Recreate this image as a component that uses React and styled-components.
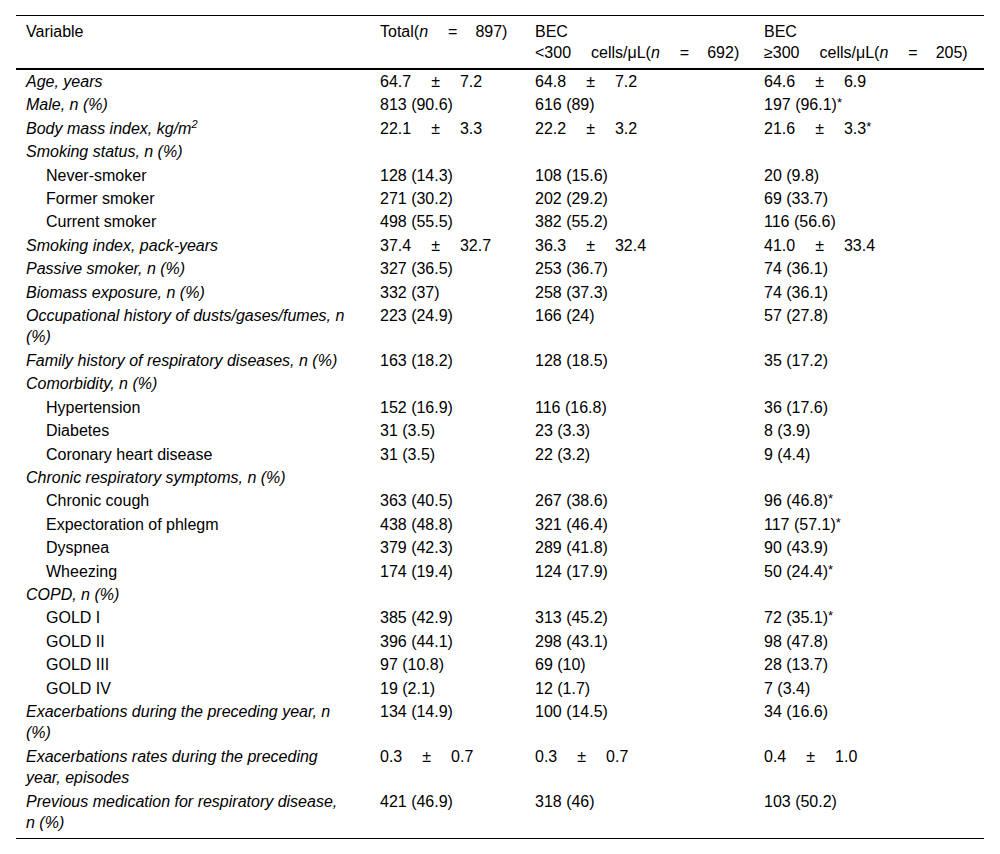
import React from 'react';
import styled, { createGlobalStyle } from 'styled-components';

const GlobalStyle = createGlobalStyle`
  html, body {
    margin: 0;
    padding: 0;
    background: #fff;
  }
  body {
    font-family: "Liberation Sans", Arial, sans-serif;
    font-size: 16px;
    color: #000;
  }
`

const Page = styled.div`
  padding: 15px 16px 0 16px;
`

const Table = styled.table`
  width: 968px;
  border-collapse: collapse;
  table-layout: fixed;
  border-top: 1px solid #000;
  border-bottom: 1px solid #000;

  tbody tr:last-child td {
    padding-bottom: 5px;
  }
`

const HeadCell = styled.th`
  text-align: left;
  vertical-align: top;
  font-weight: normal;
  line-height: 21px;
  padding: 5px 10px 5px 10px;
  border-bottom: 2px solid #000;
  white-space: nowrap;
`

const Cell = styled.td`
  vertical-align: top;
  line-height: 21.4px;
  padding: 1px 10px;
  white-space: nowrap;
  font-style: ${p => (p.$italic ? 'italic' : 'normal')};
  padding-left: ${p => (p.$indent ? '30px' : '10px')};
`

const Pm = styled.span`
  margin: 0 20px 0 20px;
`

const Sup = styled.sup`
  font-size: 11px;
  line-height: 0;
  vertical-align: 6px;
`

const Star = styled.sup`
  font-size: 13px;
  line-height: 0;
  vertical-align: 3px;
`

const Gap = styled.span`
  display: inline-block;
  width: ${p => p.$w || 18}px;
`

const mean = (a, b, star) => (
  <>
    {a}<Pm>±</Pm>{b}{star && <Star>*</Star>}
  </>
)

const pct = (v, star) => (
  <>
    {v}{star && <Star>*</Star>}
  </>
)

const rows = [
  { label: 'Age, years', it: true, v: [mean('64.7', '7.2'), mean('64.8', '7.2'), mean('64.6', '6.9')] },
  { label: 'Male, n (%)', it: true, v: ['813 (90.6)', '616 (89)', pct('197 (96.1)', true)] },
  { label: <>Body mass index, kg/m<Sup>2</Sup></>, it: true, v: [mean('22.1', '3.3'), mean('22.2', '3.2'), mean('21.6', '3.3', true)] },
  { label: 'Smoking status, n (%)', it: true, v: ['', '', ''] },
  { label: 'Never-smoker', indent: true, v: ['128 (14.3)', '108 (15.6)', '20 (9.8)'] },
  { label: 'Former smoker', indent: true, v: ['271 (30.2)', '202 (29.2)', '69 (33.7)'] },
  { label: 'Current smoker', indent: true, v: ['498 (55.5)', '382 (55.2)', '116 (56.6)'] },
  { label: 'Smoking index, pack-years', it: true, v: [mean('37.4', '32.7'), mean('36.3', '32.4'), mean('41.0', '33.4')] },
  { label: 'Passive smoker, n (%)', it: true, v: ['327 (36.5)', '253 (36.7)', '74 (36.1)'] },
  { label: 'Biomass exposure, n (%)', it: true, v: ['332 (37)', '258 (37.3)', '74 (36.1)'] },
  { label: <>Occupational history of dusts/gases/fumes, n<br />(%)</>, it: true, v: ['223 (24.9)', '166 (24)', '57 (27.8)'] },
  { label: 'Family history of respiratory diseases, n (%)', it: true, v: ['163 (18.2)', '128 (18.5)', '35 (17.2)'] },
  { label: 'Comorbidity, n (%)', it: true, v: ['', '', ''] },
  { label: 'Hypertension', indent: true, v: ['152 (16.9)', '116 (16.8)', '36 (17.6)'] },
  { label: 'Diabetes', indent: true, v: ['31 (3.5)', '23 (3.3)', '8 (3.9)'] },
  { label: 'Coronary heart disease', indent: true, v: ['31 (3.5)', '22 (3.2)', '9 (4.4)'] },
  { label: 'Chronic respiratory symptoms, n (%)', it: true, v: ['', '', ''] },
  { label: 'Chronic cough', indent: true, v: ['363 (40.5)', '267 (38.6)', pct('96 (46.8)', true)] },
  { label: 'Expectoration of phlegm', indent: true, v: ['438 (48.8)', '321 (46.4)', pct('117 (57.1)', true)] },
  { label: 'Dyspnea', indent: true, v: ['379 (42.3)', '289 (41.8)', '90 (43.9)'] },
  { label: 'Wheezing', indent: true, v: ['174 (19.4)', '124 (17.9)', pct('50 (24.4)', true)] },
  { label: 'COPD, n (%)', it: true, v: ['', '', ''] },
  { label: 'GOLD I', indent: true, v: ['385 (42.9)', '313 (45.2)', pct('72 (35.1)', true)] },
  { label: 'GOLD II', indent: true, v: ['396 (44.1)', '298 (43.1)', '98 (47.8)'] },
  { label: 'GOLD III', indent: true, v: ['97 (10.8)', '69 (10)', '28 (13.7)'] },
  { label: 'GOLD IV', indent: true, v: ['19 (2.1)', '12 (1.7)', '7 (3.4)'] },
  { label: <>Exacerbations during the preceding year, n<br />(%)</>, it: true, v: ['134 (14.9)', '100 (14.5)', '34 (16.6)'] },
  { label: <>Exacerbations rates during the preceding<br />year, episodes</>, it: true, v: [mean('0.3', '0.7'), mean('0.3', '0.7'), mean('0.4', '1.0')] },
  { label: <>Previous medication for respiratory disease,<br />n (%)</>, it: true, v: ['421 (46.9)', '318 (46)', '103 (50.2)'] },
]

const N = () => <i>n</i>

export default function App() {
  return (
    <Page>
      <GlobalStyle />
      <Table>
        <colgroup>
          <col style={{ width: 354 }} />
          <col style={{ width: 155 }} />
          <col style={{ width: 229 }} />
          <col style={{ width: 230 }} />
        </colgroup>
        <thead>
          <tr>
            <HeadCell>Variable</HeadCell>
            <HeadCell>Total(<N /><Gap $w={20} />=<Gap $w={18} />897)</HeadCell>
            <HeadCell>BEC<br />&lt;300<Gap $w={20} />cells/μL(<N /><Gap $w={20} />=<Gap $w={18} />692)</HeadCell>
            <HeadCell>BEC<br />≥300<Gap $w={20} />cells/μL(<N /><Gap $w={20} />=<Gap $w={18} />205)</HeadCell>
          </tr>
        </thead>
        <tbody>
          {rows.map((r, i) => (
            <tr key={i}>
              <Cell $italic={r.it} $indent={r.indent}>{r.label}</Cell>
              {r.v.map((v, j) => (
                <Cell key={j}>{v}</Cell>
              ))}
            </tr>
          ))}
        </tbody>
      </Table>
    </Page>
  );
}
